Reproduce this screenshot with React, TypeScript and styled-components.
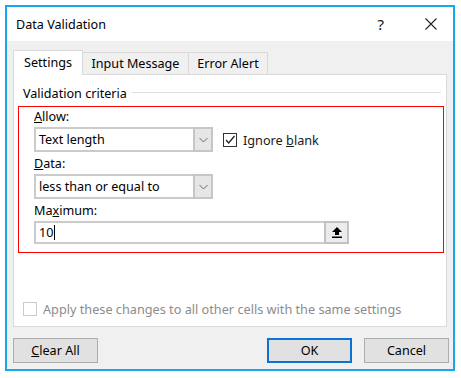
import React from 'react'
import styled, { createGlobalStyle } from 'styled-components'

const Global = createGlobalStyle`
    html, body {
        margin: 0;
        background: #ffffff;
    }
    body {
        padding: 5px 6px 7px 5px;
        font-family: 'Noto Sans', 'Open Sans', sans-serif;
        font-size: 12.5px;
        color: #000000;
    }
`

const Window = styled.div`
    width: 450px;
    height: 366px;
    box-sizing: border-box;
    border: 2px solid #19a6ea;
    background: #f0f0f0;
    display: flex;
    flex-direction: column;
`

const TitleBar = styled.div`
    height: 34px;
    flex: none;
    background: #ffffff;
    display: flex;
    align-items: center;
    padding-left: 9px;
`

const Title = styled.span`
    font-size: 12.6px;
`

const Captions = styled.div`
    margin-left: auto;
    display: flex;
    align-items: center;
    gap: 41px;
    padding-right: 16px;
`

const Help = styled.span`
    font-size: 15px;
    line-height: 1;
    color: #111111;
`

const Body = styled.div`
    flex: 1;
    display: flex;
    flex-direction: column;
    padding: 9px 6px 6px 6px;
`

const TabRow = styled.div`
    height: 24px;
    display: flex;
    align-items: flex-end;
`

const Tab = styled.div<{ $active?: boolean; $w: number }>`
    width: ${p => p.$w}px;
    height: ${p => (p.$active ? 25 : 22)}px;
    box-sizing: border-box;
    margin-bottom: ${p => (p.$active ? -1 : 0)}px;
    margin-left: -1px;
    border: 1px solid #d9d9d9;
    border-bottom: none;
    background: ${p => (p.$active ? '#ffffff' : '#f0f0f0')};
    position: relative;
    z-index: ${p => (p.$active ? 1 : 0)};
    display: flex;
    align-items: center;
    justify-content: center;
    padding-bottom: ${p => (p.$active ? 2 : 0)}px;
    font-size: 12.6px;

    &:first-child {
        margin-left: 0;
    }
`

const Panel = styled.div`
    height: 253px;
    box-sizing: border-box;
    border: 1px solid #d9d9d9;
    background: #ffffff;
    padding: 11px 2px 9px 4px;
    display: flex;
    flex-direction: column;
`

const Legend = styled.div`
    display: flex;
    align-items: center;
    gap: 5px;
    margin: 0 3px 0 5px;
    line-height: 16px;
    font-size: 12.6px;

    &::after {
        content: '';
        flex: 1;
        height: 1px;
        margin-top: -3px;
        background: #dedede;
    }
`

const Highlight = styled.div`
    margin-top: 4px;
    border: 1px solid #ff0000;
    padding: 2px 0 8px 15px;
    display: flex;
    flex-direction: column;
`

const Label = styled.div<{ $gap?: number }>`
    line-height: 16px;
    margin-top: ${p => p.$gap ?? 0}px;
    margin-bottom: 2px;
    font-size: 12.6px;
`

const Row = styled.div`
    display: flex;
    align-items: center;
    gap: 10px;
`

const Combo = styled.div`
    width: 179px;
    height: 25px;
    box-sizing: border-box;
    border: 2px solid #cbcbcb;
    border-right: none;
    background: #ffffff;
    display: flex;
`

const ComboText = styled.div`
    flex: 1;
    display: flex;
    align-items: center;
    padding-left: 3px;
    font-size: 12.6px;
`

const DropButton = styled.div`
    width: 20px;
    box-sizing: border-box;
    margin: -2px 0;
    border: 2px solid #c6c6c6;
    background: #e6e6e6;
    display: flex;
    align-items: center;
    justify-content: center;
`

const Check = styled.label<{ $disabled?: boolean }>`
    display: flex;
    align-items: center;
    gap: 6px;
    font-size: 12.7px;
    color: ${p => (p.$disabled ? '#8c8c8c' : '#1a1a1a')};
`

const Box = styled.span<{ $disabled?: boolean }>`
    width: 14px;
    height: 14px;
    box-sizing: border-box;
    border: 1px solid ${p => (p.$disabled ? '#cccccc' : '#333333')};
    background: #ffffff;
    display: flex;
    align-items: center;
    justify-content: center;
`

const Input = styled.div`
    width: 315px;
    height: 23px;
    box-sizing: border-box;
    border: 2px solid #cbcbcb;
    border-right: none;
    display: flex;
`

const InputText = styled.div`
    flex: 1;
    display: flex;
    align-items: center;
    padding-left: 3px;
    font-size: 12.6px;
`

const Caret = styled.span`
    width: 1px;
    height: 15px;
    margin-left: 1px;
    background: #000000;
`

const RefButton = styled.div`
    width: 25px;
    box-sizing: border-box;
    margin: -2px 0;
    border: 2px solid #c2c2c2;
    background: #ececec;
    display: flex;
    align-items: center;
    justify-content: center;
`

const ApplyRow = styled.div`
    margin-top: auto;
    margin-left: 5px;
    line-height: 16px;
`

const Footer = styled.div`
    margin-top: 11px;
    margin-right: -2px;
    display: flex;
    gap: 12px;
`

const Button = styled.div<{ $default?: boolean }>`
    width: 85px;
    height: 25px;
    box-sizing: border-box;
    border: ${p => (p.$default ? '2px solid #0a74d4' : '1px solid #adadad')};
    background: #e1e1e1;
    display: flex;
    align-items: center;
    justify-content: center;
    font-size: 12.6px;

    &:first-child {
        margin-right: auto;
    }
`

const Chevron = () => (
    <svg width="9" height="6" viewBox="0 0 9 6">
        <path d="M0.5 1 L4.5 5 L8.5 1" fill="none" stroke="#6a6a6a" strokeWidth="1" />
    </svg>
)

const CloseIcon = () => (
    <svg width="12" height="12" viewBox="0 0 12 12">
        <path d="M0.5 0.5 L11.5 11.5 M11.5 0.5 L0.5 11.5" stroke="#222222" strokeWidth="1.1" />
    </svg>
)

const Tick = () => (
    <svg width="12" height="12" viewBox="0 0 12 12">
        <path d="M2 6 L4.7 9 L10.5 2" fill="none" stroke="#222222" strokeWidth="1.3" />
    </svg>
)

const CollapseIcon = () => (
    <svg width="10" height="11" viewBox="0 0 10 11">
        <path d="M5 0 L10 5 L7 5 L7 8 L3 8 L3 5 L0 5 Z" fill="#000000" />
        <rect x="0" y="9.5" width="10" height="1.5" fill="#000000" />
    </svg>
)

export default function App() {
    return (
        <>
            <Global />
            <Window>
                <TitleBar>
                    <Title>Data Validation</Title>
                    <Captions>
                        <Help>?</Help>
                        <CloseIcon />
                    </Captions>
                </TitleBar>
                <Body>
                    <TabRow>
                        <Tab $active $w={70}>Settings</Tab>
                        <Tab $w={107}>Input Message</Tab>
                        <Tab $w={80}>Error Alert</Tab>
                    </TabRow>
                    <Panel>
                        <Legend>Validation criteria</Legend>
                        <Highlight>
                            <Label><u>A</u>llow:</Label>
                            <Row>
                                <Combo>
                                    <ComboText>Text length</ComboText>
                                    <DropButton><Chevron /></DropButton>
                                </Combo>
                                <Check>
                                    <Box><Tick /></Box>
                                    <span>Ignore <u>b</u>lank</span>
                                </Check>
                            </Row>
                            <Label $gap={4}><u>D</u>ata:</Label>
                            <Row>
                                <Combo>
                                    <ComboText>less than or equal to</ComboText>
                                    <DropButton><Chevron /></DropButton>
                                </Combo>
                            </Row>
                            <Label $gap={4}>Ma<u>x</u>imum:</Label>
                            <Input>
                                <InputText>10<Caret /></InputText>
                                <RefButton><CollapseIcon /></RefButton>
                            </Input>
                        </Highlight>
                        <ApplyRow>
                            <Check $disabled>
                                <Box $disabled />
                                <span>Apply these changes to all other cells with the same settings</span>
                            </Check>
                        </ApplyRow>
                    </Panel>
                    <Footer>
                        <Button><u>C</u>lear All</Button>
                        <Button $default>OK</Button>
                        <Button>Cancel</Button>
                    </Footer>
                </Body>
            </Window>
        </>
    )
}
